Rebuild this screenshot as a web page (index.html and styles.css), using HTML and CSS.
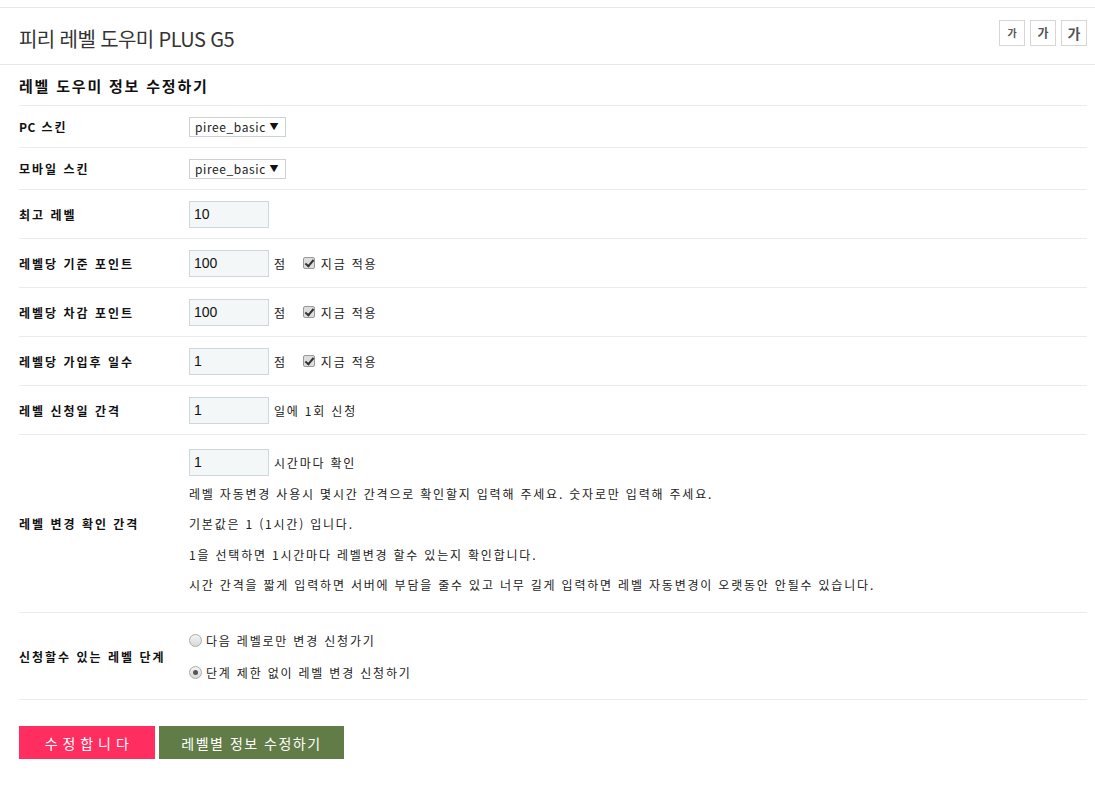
FILE: index.html
```html
<!DOCTYPE html>
<html lang="ko">
<head>
<meta charset="utf-8">
<title>피리 레벨 도우미 PLUS G5</title>
<link rel="stylesheet" href="styles.css">
</head>
<body>
<div class="topbar"></div>
<header class="head">
  <h1 class="title">피리 레벨 도우미 PLUS G5</h1>
  <div class="fontsize">
    <button class="fs fs1">가</button>
    <button class="fs fs2">가</button>
    <button class="fs fs3">가</button>
  </div>
</header>
<main class="content">
  <h2 class="subtitle">레벨 도우미 정보 수정하기</h2>
  <div class="rows">
    <div class="row r42">
      <div class="label"><span class="latin">PC</span> 스킨</div>
      <div class="val"><span class="select">piree_basic<span class="arrow">▼</span></span></div>
    </div>
    <div class="row r42">
      <div class="label">모바일 스킨</div>
      <div class="val"><span class="select">piree_basic<span class="arrow">▼</span></span></div>
    </div>
    <div class="row r49">
      <div class="label">최고 레벨</div>
      <div class="val"><span class="input">10</span></div>
    </div>
    <div class="row r49">
      <div class="label">레벨당 기준 포인트</div>
      <div class="val"><span class="input">100</span><span class="unit">점</span><span class="check"></span><span class="txt">지금 적용</span></div>
    </div>
    <div class="row r49">
      <div class="label">레벨당 차감 포인트</div>
      <div class="val"><span class="input">100</span><span class="unit">점</span><span class="check"></span><span class="txt">지금 적용</span></div>
    </div>
    <div class="row r49">
      <div class="label">레벨당 가입후 일수</div>
      <div class="val"><span class="input">1</span><span class="unit">점</span><span class="check"></span><span class="txt">지금 적용</span></div>
    </div>
    <div class="row r49">
      <div class="label">레벨 신청일 간격</div>
      <div class="val"><span class="input">1</span><span class="unit">일에 1회 신청</span></div>
    </div>
    <div class="row rbig">
      <div class="label">레벨 변경 확인 간격</div>
      <div class="val col">
        <div class="line first"><span class="input">1</span><span class="unit">시간마다 확인</span></div>
        <p class="help">레벨 자동변경 사용시 몇시간 간격으로 확인할지 입력해 주세요. 숫자로만 입력해 주세요.</p>
        <p class="help">기본값은 1 (1시간) 입니다.</p>
        <p class="help">1을 선택하면 1시간마다 레벨변경 할수 있는지 확인합니다.</p>
        <p class="help">시간 간격을 짧게 입력하면 서버에 부담을 줄수 있고 너무 길게 입력하면 레벨 자동변경이 오랫동안 안될수 있습니다.</p>
      </div>
    </div>
    <div class="row rradio">
      <div class="label">신청할수 있는 레벨 단계</div>
      <div class="val col">
        <div class="radio-line"><span class="radio"></span>다음 레벨로만 변경 신청가기</div>
        <div class="radio-line"><span class="radio on"></span>단계 제한 없이 레벨 변경 신청하기</div>
      </div>
    </div>
  </div>
  <div class="actions">
    <button class="btn btn-pink">수 정 합 니 다</button>
    <button class="btn btn-green">레벨별 정보 수정하기</button>
  </div>
</main>
</body>
</html>
```

FILE: styles.css
```css
* { box-sizing: border-box; }
body {
  margin: 0;
  background: #fff;
  color: #222;
  font-family: "Noto Sans CJK KR", "Noto Sans", sans-serif;
  font-size: 12px;
  letter-spacing: 1.8px;
}
.topbar {
  height: 8px;
  border-bottom: 1px solid #e6e6e6;
}
.head {
  height: 57px;
  display: flex;
  align-items: center;
  justify-content: space-between;
  padding: 0 8px 0 19px;
  border-bottom: 1px solid #e6e6e6;
}
.title {
  margin: 0;
  font-size: 20px;
  font-weight: normal;
  color: #333;
  letter-spacing: -0.6px;
  line-height: 1;
  padding-top: 6px;
}
.fontsize {
  display: flex;
  gap: 5px;
  margin-top: -6px;
}
.fs {
  width: 26px;
  height: 26px;
  padding: 0;
  border: 1px solid #d6d6d6;
  background: #fff;
  color: #555;
  font-family: "Noto Sans CJK KR", sans-serif;
  line-height: 1;
  font-weight: bold;
  letter-spacing: 0;
}
.fs1 { font-size: 10px; }
.fs2 { font-size: 12px; }
.fs3 { font-size: 14px; }
.content {
  padding: 0 8px 0 19px;
}
.subtitle {
  margin: 0;
  height: 41px;
  display: flex;
  align-items: center;
  font-size: 15px;
  font-weight: bold;
  color: #111;
  letter-spacing: 1.8px;
  border-bottom: 1px solid #ebebeb;
}
.row {
  display: flex;
  align-items: center;
  border-bottom: 1px solid #ebebeb;
}
.r42 { height: 42px; }
.r49 { height: 49px; }
.rbig { height: 178px; }
.rradio { height: 87px; }
.label {
  width: 170px;
  flex: none;
  font-weight: bold;
  color: #111;
  font-size: 12px;
  letter-spacing: 2px;
}
.latin { letter-spacing: 0.6px; }
.val {
  display: flex;
  align-items: center;
}
.val.col {
  flex-direction: column;
  align-items: flex-start;
}
.select {
  display: inline-flex;
  align-items: center;
  justify-content: space-between;
  width: 97px;
  height: 20px;
  border: 1px solid #ccd3d6;
  padding: 0 6px 0 5px;
  font-size: 12px;
  color: #222;
  letter-spacing: 0.6px;
  background: #fff;
}
.arrow { font-size: 9px; color: #111; }
.input {
  display: inline-flex;
  align-items: center;
  width: 80px;
  height: 27px;
  border: 1px solid #cdd7dd;
  background: #f4f7f8;
  padding-left: 4px;
  font-family: "Liberation Sans", sans-serif;
  font-size: 14px;
  letter-spacing: 0;
  color: #111;
}
.unit { margin-left: 5px; }
.check {
  display: inline-block;
  width: 12px;
  height: 12px;
  margin-left: 16px;
  border: 1px solid #999;
  border-radius: 2px;
  background: #ddd;
  position: relative;
}
.check::after {
  content: "";
  position: absolute;
  left: 3px;
  top: 0px;
  width: 3px;
  height: 7px;
  border: solid #333;
  border-width: 0 2px 2px 0;
  transform: rotate(40deg);
}
.txt { margin-left: 6px; }
.line.first { display: flex; align-items: center; margin-top: 0; margin-bottom: 3px; }
.help {
  margin: 0;
  height: 30.5px;
  line-height: 30.5px;
}
.rbig .val { padding-top: 2px; }
.radio-line {
  display: flex;
  align-items: center;
  height: 32px;
}
.radio {
  display: inline-block;
  width: 13px;
  height: 13px;
  border-radius: 50%;
  border: 1px solid #aaa;
  background: linear-gradient(#f4f4f4, #d8d8d8);
  margin-right: 4px;
  position: relative;
}
.radio.on::after {
  content: "";
  position: absolute;
  left: 3px;
  top: 3px;
  width: 5px;
  height: 5px;
  border-radius: 50%;
  background: #555;
}
.actions {
  display: flex;
  gap: 4px;
  padding-top: 26px;
}
.btn {
  height: 33px;
  border: none;
  color: #fff;
  font-family: "Noto Sans CJK KR", sans-serif;
  font-size: 14px;
  padding: 0;
}
.btn-pink {
  width: 136px;
  background: #ff2d60;
  letter-spacing: 0.5px;
}
.btn-green {
  width: 185px;
  background: #617c47;
  letter-spacing: 1.5px;
}
```
